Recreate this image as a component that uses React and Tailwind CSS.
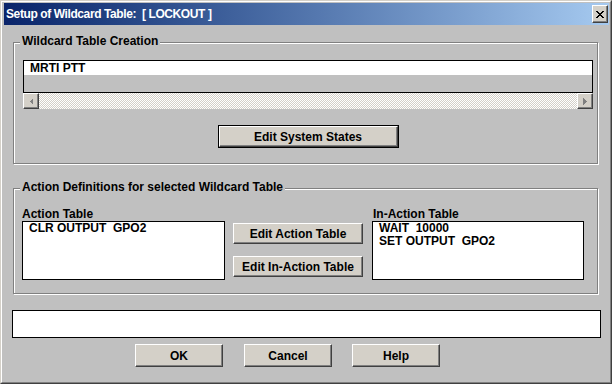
function Btn({ className = "", children }) {
  return (
    <div
      className={
        "flex items-center justify-center bg-[#d4d0c8] border border-t-white border-l-white border-r-[#404040] border-b-[#404040] shadow-[inset_-1px_-1px_0_#808080] text-[12px] font-bold leading-[14px] text-black " +
        className
      }
    >
      {children}
    </div>
  );
}

function CloseGlyph() {
  const rows = [
    "XX....XX",
    ".XX..XX.",
    "..XXXX..",
    "...XX...",
    "..XXXX..",
    ".XX..XX.",
    "XX....XX",
  ];
  const rects = [];
  rows.forEach((r, y) =>
    r.split("").forEach((c, x) => {
      if (c === "X") rects.push(<rect key={x + "-" + y} x={x} y={y} width="1" height="1" fill="#000" />);
    })
  );
  return (
    <svg width="8" height="7" viewBox="0 0 8 7" shapeRendering="crispEdges">
      {rects}
    </svg>
  );
}

function ScrollBtn({ dir }) {
  return (
    <div className="flex h-[16px] w-[16px] shrink-0 items-center justify-center bg-[#d4d0c8] border border-t-white border-l-white border-r-[#404040] border-b-[#404040] shadow-[inset_-1px_-1px_0_#808080]">
      <svg width="4" height="7" viewBox="0 0 4 7" shapeRendering="crispEdges">
        {dir === "left" ? (
          <polygon points="4,0 4,7 0.5,3.5" fill="#808080" />
        ) : (
          <polygon points="0,0 0,7 3.5,3.5" fill="#808080" />
        )}
      </svg>
    </div>
  );
}

function GroupBox({ title, className = "", children }) {
  return (
    <div
      className={
        "relative border border-[#808080] shadow-[inset_1px_1px_0_#ffffff,1px_1px_0_#ffffff] " + className
      }
    >
      <span className="absolute left-[6px] -top-[9px] bg-[#c0c0c0] px-[2px] text-[12px] font-bold leading-[14px] text-black whitespace-nowrap">
        {title}
      </span>
      {children}
    </div>
  );
}

export default function App() {
  return (
    <div className="w-[612px] h-[384px] overflow-hidden bg-[#c0c0c0] font-['Liberation_Sans',Arial,sans-serif] text-black border border-t-[#d4d0c8] border-l-[#d4d0c8] border-r-[#404040] border-b-[#404040]">
      <div className="h-full border border-t-white border-l-white border-r-[#808080] border-b-[#808080] pt-[1px] pl-[2px] pr-[1px]">
        {/* Title bar */}
        <div className="flex h-[22px] items-center justify-between bg-linear-to-r from-[#0a246a] to-[#a6caf0] pl-[2px] pr-[1px]">
          <span className="text-[12px] font-bold leading-[14px] text-white tracking-[-0.4px] whitespace-pre">
            Setup of Wildcard Table:  [ LOCKOUT ]
          </span>
          <div className="flex h-[18px] w-[16px] items-center justify-center bg-[#d4d0c8] border border-t-white border-l-white border-r-[#404040] border-b-[#404040] shadow-[inset_-1px_-1px_0_#808080]">
            <CloseGlyph />
          </div>
        </div>

        {/* Group 1 */}
        <GroupBox title="Wildcard Table Creation" className="ml-[9px] mt-[17px] w-[585px] h-[122px] pt-[17px] pl-[9px]">
          <div className="w-[570px]">
            <div className="h-[33px] border border-black bg-[#c0c0c0]">
              <div className="h-[14px] bg-white pl-[6px] text-[12px] font-bold leading-[14px]">MRTI PTT</div>
            </div>
            <div className="flex h-[16px]">
              <ScrollBtn dir="left" />
              <div className="flex-1 bg-[repeating-conic-gradient(#d4d0c8_0%_25%,#ffffff_0%_50%)] bg-[length:2px_2px]" />
              <ScrollBtn dir="right" />
            </div>
            <div className="mt-[16px] flex justify-center">
              <div className="border border-black">
                <Btn className="w-[179px] h-[21px]">Edit System States</Btn>
              </div>
            </div>
          </div>
        </GroupBox>

        {/* Group 2 */}
        <GroupBox
          title="Action Definitions for selected Wildcard Table"
          className="ml-[9px] mt-[24px] w-[585px] h-[106px] pt-[18px] pl-[8px]"
        >
          <div className="flex">
            <div className="w-[203px]">
              <div className="h-[14px] text-[12px] font-bold leading-[14px]">Action Table</div>
              <div className="h-[59px] border border-black bg-white pl-[6px] text-[12px] font-bold leading-[13px] whitespace-pre">
                CLR OUTPUT  GPO2
              </div>
            </div>
            <div className="ml-[8px] flex w-[130px] flex-col gap-[12px] pt-[16px]">
              <Btn className="h-[21px] w-[130px]">Edit Action Table</Btn>
              <Btn className="h-[21px] w-[130px]">Edit In-Action Table</Btn>
            </div>
            <div className="ml-[9px] w-[212px]">
              <div className="h-[14px] pl-[1px] text-[12px] font-bold leading-[14px]">In-Action Table</div>
              <div className="h-[59px] border border-black bg-white pl-[6px] text-[12px] font-bold leading-[13px] whitespace-pre">
                <div>WAIT  10000</div>
                <div>SET OUTPUT  GPO2</div>
              </div>
            </div>
          </div>
        </GroupBox>

        {/* Status box */}
        <div className="ml-[8px] mt-[16px] h-[28px] w-[589px] border border-black bg-white" />

        {/* Buttons */}
        <div className="ml-[131px] mt-[6px] flex gap-[20px]">
          <Btn className="h-[23px] w-[88px]">OK</Btn>
          <Btn className="ml-[1px] h-[23px] w-[88px]">Cancel</Btn>
          <Btn className="h-[23px] w-[88px]">Help</Btn>
        </div>
      </div>
    </div>
  );
}
